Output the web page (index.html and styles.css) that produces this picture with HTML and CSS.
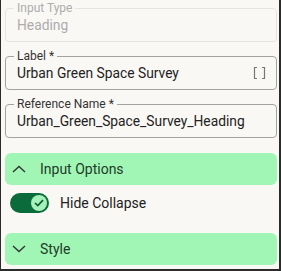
FILE: index.html
```html
<!DOCTYPE html>
<html lang="en">
<head>
    <meta charset="UTF-8">
    <title>Heading settings</title>
    <link rel="stylesheet" href="styles.css">
</head>
<body>
<div class="panel">
    <fieldset class="field disabled">
        <legend>Input Type</legend>
        <div class="value">Heading</div>
    </fieldset>

    <fieldset class="field">
        <legend>Label *</legend>
        <div class="value">
            <span>Urban Green Space Survey</span>
            <svg class="bracket" width="13" height="14" viewBox="0 0 13 14">
                <path d="M4 1.5H1.5V12.5H4M9 1.5H11.5V12.5H9" fill="none" stroke="#777" stroke-width="1.2"/>
            </svg>
        </div>
    </fieldset>

    <fieldset class="field">
        <legend>Reference Name *</legend>
        <div class="value">Urban_Green_Space_Survey_Heading</div>
    </fieldset>

    <div class="accordion">
        <svg class="chevron" width="14" height="8" viewBox="0 0 14 8">
            <path d="M1 7L7 1.5L13 7" fill="none" stroke="#333" stroke-width="1.4"/>
        </svg>
        <span>Input Options</span>
    </div>

    <div class="toggle-row">
        <div class="switch">
            <div class="knob">
                <svg width="10" height="8" viewBox="0 0 10 8">
                    <path d="M1 4L3.8 6.6L9 1.2" fill="none" stroke="#0b5c33" stroke-width="1.7"/>
                </svg>
            </div>
        </div>
        <span>Hide Collapse</span>
    </div>

    <div class="accordion">
        <svg class="chevron" width="14" height="8" viewBox="0 0 14 8">
            <path d="M1 1L7 6.5L13 1" fill="none" stroke="#333" stroke-width="1.4"/>
        </svg>
        <span>Style</span>
    </div>
</div>
</body>
</html>
```

FILE: styles.css
```css
* {
    margin: 0;
    padding: 0;
    box-sizing: border-box;
}

body {
    font-family: Roboto, "Liberation Sans", sans-serif;
    color: #222;
}

.panel {
    width: 281px;
    height: 271px;
    background: #faf8f5;
    border-left: 1px solid #2b2b2b;
    border-right: 2px solid #2b2b2b;
    border-bottom: 2px solid #2b2b2b;
    padding: 1px 2px 0 4px;
    display: flex;
    flex-direction: column;
}

.field {
    border: 1px solid #a3a3a3;
    border-radius: 4px;
    padding: 0 11px 6px;
    margin-bottom: 7px;
}

.field legend {
    font-size: 12px;
    line-height: 14px;
    padding: 0 3px;
    margin-left: -3px;
    color: #333;
}

.field .value {
    font-size: 13.8px;
    line-height: 20px;
    display: flex;
    align-items: center;
    justify-content: space-between;
}

.bracket {
    margin-right: -1px;
}

.disabled {
    border-color: #e6e4e1;
}

.disabled legend,
.disabled .value {
    color: #adadad;
}

.accordion {
    height: 32px;
    flex-shrink: 0;
    background: #a1f6b6;
    border-radius: 6px;
    display: flex;
    align-items: center;
    padding-left: 7px;
    gap: 14px;
    font-size: 14px;
    color: #1e3b27;
}

.panel .field + .accordion {
    margin-top: 8px;
}

.toggle-row {
    display: flex;
    align-items: center;
    padding: 8px 0 20px 5px;
    gap: 11px;
    font-size: 14px;
}

.switch {
    width: 39px;
    height: 20px;
    border-radius: 10px;
    background: #0b6b3b;
    display: flex;
    align-items: center;
    justify-content: flex-end;
    padding-right: 2px;
}

.knob {
    width: 16px;
    height: 16px;
    border-radius: 50%;
    background: #a6f0b9;
    display: flex;
    align-items: center;
    justify-content: center;
}
```
